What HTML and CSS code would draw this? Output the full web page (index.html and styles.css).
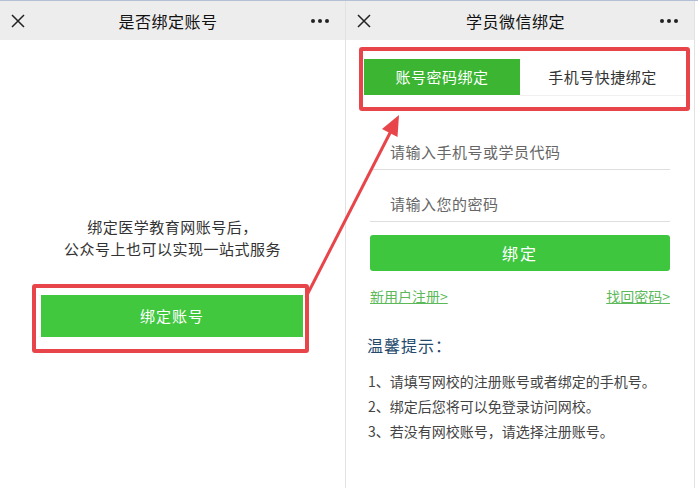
FILE: index.html
```
<!DOCTYPE html>
<html lang="zh-CN">
<head>
    <meta charset="UTF-8">
    <meta name="viewport" content="width=device-width, initial-scale=1.0">
    <title>是否绑定账号</title>
    <link rel="stylesheet" href="styles.css">
</head>
<body>

  <div class="telas">

    <!-- tela 1: aviso -->
    <div class="tela tela-esq">
      <div class="topo">
        <svg class="fechar" width="14" height="14" viewBox="0 0 14 14"><path d="M1 1L13 13M13 1L1 13" stroke="#222" stroke-width="1.5" fill="none"/></svg>
        <span class="titulo">是否绑定账号</span>
        <span class="pontos"><i></i><i></i><i></i></span>
      </div>

      <p class="aviso">绑定医学教育网账号后，<br>公众号上也可以实现一站式服务</p>

      <div class="destaque destaque-botao">
        <div class="botao-verde">绑定账号</div>
      </div>
    </div>

    <!-- tela 2: formulario -->
    <div class="tela tela-dir">
      <div class="topo">
        <svg class="fechar" width="14" height="14" viewBox="0 0 14 14"><path d="M1 1L13 13M13 1L1 13" stroke="#222" stroke-width="1.5" fill="none"/></svg>
        <span class="titulo">学员微信绑定</span>
        <span class="pontos"><i></i><i></i><i></i></span>
      </div>

      <div class="destaque destaque-abas">
        <div class="abas">
          <div class="aba ativa">账号密码绑定</div>
          <div class="aba">手机号快捷绑定</div>
        </div>
      </div>

      <div class="form">
        <div class="campo">请输入手机号或学员代码</div>
        <div class="campo">请输入您的密码</div>
        <div class="botao-bind">绑定</div>
        <div class="links">
          <a href="#">新用户注册&gt;</a>
          <a href="#">找回密码&gt;</a>
        </div>

        <h3 class="dica">温馨提示：</h3>
        <ol class="lista">
          <li>1、请填写网校的注册账号或者绑定的手机号。</li>
          <li>2、绑定后您将可以免登录访问网校。</li>
          <li>3、若没有网校账号，请选择注册账号。</li>
        </ol>
      </div>
    </div>

  </div>

  <!-- seta vermelha por cima das telas -->
  <svg class="seta" width="698" height="488" viewBox="0 0 698 488">
    <line x1="306" y1="297" x2="391" y2="131" stroke="#e8454a" stroke-width="3"/>
    <polygon points="399,115 397.5,137 382,129" fill="#e8454a"/>
  </svg>

</body>
</html>
```

FILE: styles.css
```
body {
  margin: 0;
  background-color: #fff;
  font-family: "Noto Sans CJK SC", "Liberation Sans", sans-serif;
  color: #333;
}

.telas {
  display: flex;
  flex-direction: row;
  border-top: 1px solid #b4c0d6;
  height: 487px;
}

.tela {
  border-right: 1px solid #e2e2e2;
  display: flex;
  flex-direction: column;
}

.tela-esq {
  width: 345px;
}

.tela-dir {
  width: 348px;
}

.topo {
  height: 39px;
  background-color: #ededed;
  display: flex;
  align-items: center;
  justify-content: space-between;
  padding: 0 16px 0 11px;
}

.titulo {
  font-size: 16px;
  color: #111;
  letter-spacing: 0.5px;
}

.pontos {
  display: flex;
  gap: 3px;
}

.pontos i {
  width: 4px;
  height: 4px;
  border-radius: 50%;
  background-color: #222;
}

.aviso {
  margin: 176px 0 0;
  text-align: center;
  font-size: 15px;
  line-height: 22px;
  color: #333;
  letter-spacing: 0.5px;
}

/* caixas vermelhas de destaque */
.destaque {
  border: 4px solid #e8454a;
  border-radius: 3px;
}

.destaque-botao {
  margin: 24px 0 0 32px;
  width: 262px;
  padding: 7px 2px 12px 5px;
}

.botao-verde {
  background-color: #42c83f;
  color: #fff;
  font-size: 15px;
  height: 42px;
  line-height: 42px;
  text-align: center;
  letter-spacing: 1px;
}

.destaque-abas {
  margin: 7px 4px 0 13px;
  padding: 8px 1px 11px 1px;
}

.abas {
  display: flex;
}

.aba {
  flex: 1;
  height: 36px;
  line-height: 36px;
  text-align: center;
  font-size: 15px;
  color: #333;
  letter-spacing: 0.5px;
  border-bottom: 1px solid #f0f0f0;
}

.aba.ativa {
  flex: 0 0 156px;
  background-color: #3bb532;
  color: #fff;
  border-bottom: none;
}

.form {
  padding: 7px 24px 0;
}

.campo {
  padding: 24px 0 7px 20px;
  line-height: 20px;
  font-size: 15px;
  color: #666;
  border-bottom: 1px solid #dedede;
  letter-spacing: 0.5px;
}

.botao-bind {
  margin-top: 13px;
  height: 36px;
  line-height: 36px;
  background-color: #3fc63f;
  border-radius: 3px;
  color: #fff;
  text-align: center;
  font-size: 16px;
  letter-spacing: 2px;
}

.links {
  display: flex;
  justify-content: space-between;
  margin-top: 16px;
  line-height: 18px;
}

.links a {
  color: #5cb95a;
  font-size: 14px;
  text-decoration: underline;
}

.dica {
  margin: 30px 0 0 -3px;
  font-size: 16px;
  font-weight: normal;
  color: #24496b;
  line-height: 20px;
  letter-spacing: 1px;
}

.lista {
  list-style: none;
  margin: 14px 0 0 -2px;
  padding: 0;
  font-size: 14px;
  line-height: 25px;
  color: #444;
}

.seta {
  position: absolute;
  top: 0;
  left: 0;
  pointer-events: none;
}
```
